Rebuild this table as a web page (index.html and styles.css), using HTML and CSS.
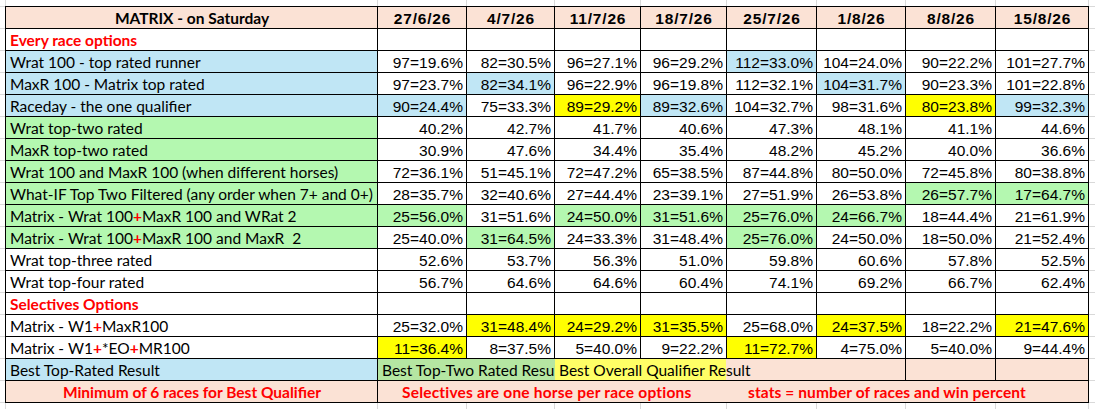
FILE: index.html
```html
<!DOCTYPE html>
<html lang="en">
<head>
<meta charset="utf-8">
<title>MATRIX - on Saturday</title>
<link rel="stylesheet" href="styles.css">
</head>
<body>
<div class="sheet">
  <div class="ruler top"><span></span><span></span><span></span><span></span><span></span><span></span><span></span><span></span><span></span></div>
  <div class="table">
    <div class="c pe ttl">MATRIX - on Saturday</div>
    <div class="c pe hd">27/6/26</div>
    <div class="c pe hd">4/7/26</div>
    <div class="c pe hd">11/7/26</div>
    <div class="c pe hd">18/7/26</div>
    <div class="c pe hd">25/7/26</div>
    <div class="c pe hd">1/8/26</div>
    <div class="c pe hd">8/8/26</div>
    <div class="c pe hd">15/8/26</div>

    <div class="c sec">Every race options</div>
    <div class="c"></div><div class="c"></div><div class="c"></div><div class="c"></div><div class="c"></div><div class="c"></div><div class="c"></div><div class="c"></div>

    <div class="c lbl bl">Wrat 100 - top rated runner</div>
    <div class="c num">97=19.6%</div>
    <div class="c num">82=30.5%</div>
    <div class="c num">96=27.1%</div>
    <div class="c num">96=29.2%</div>
    <div class="c num bl">112=33.0%</div>
    <div class="c num">104=24.0%</div>
    <div class="c num">90=22.2%</div>
    <div class="c num">101=27.7%</div>

    <div class="c lbl bl">MaxR 100 - Matrix top rated</div>
    <div class="c num">97=23.7%</div>
    <div class="c num bl">82=34.1%</div>
    <div class="c num">96=22.9%</div>
    <div class="c num">96=19.8%</div>
    <div class="c num">112=32.1%</div>
    <div class="c num bl">104=31.7%</div>
    <div class="c num">90=23.3%</div>
    <div class="c num">101=22.8%</div>

    <div class="c lbl bl">Raceday - the one qualifier</div>
    <div class="c num bl">90=24.4%</div>
    <div class="c num">75=33.3%</div>
    <div class="c num ye">89=29.2%</div>
    <div class="c num bl">89=32.6%</div>
    <div class="c num">104=32.7%</div>
    <div class="c num">98=31.6%</div>
    <div class="c num ye">80=23.8%</div>
    <div class="c num bl">99=32.3%</div>

    <div class="c lbl gr">Wrat top-two rated</div>
    <div class="c num">40.2%</div>
    <div class="c num">42.7%</div>
    <div class="c num">41.7%</div>
    <div class="c num">40.6%</div>
    <div class="c num">47.3%</div>
    <div class="c num">48.1%</div>
    <div class="c num">41.1%</div>
    <div class="c num">44.6%</div>

    <div class="c lbl gr">MaxR top-two rated</div>
    <div class="c num">30.9%</div>
    <div class="c num">47.6%</div>
    <div class="c num">34.4%</div>
    <div class="c num">35.4%</div>
    <div class="c num">48.2%</div>
    <div class="c num">45.2%</div>
    <div class="c num">40.0%</div>
    <div class="c num">36.6%</div>

    <div class="c lbl gr">Wrat 100 and MaxR 100 (when different horses)</div>
    <div class="c num">72=36.1%</div>
    <div class="c num">51=45.1%</div>
    <div class="c num">72=47.2%</div>
    <div class="c num">65=38.5%</div>
    <div class="c num">87=44.8%</div>
    <div class="c num">80=50.0%</div>
    <div class="c num">72=45.8%</div>
    <div class="c num">80=38.8%</div>

    <div class="c lbl gr">What-IF Top Two Filtered (any order when 7+ and 0+)</div>
    <div class="c num">28=35.7%</div>
    <div class="c num">32=40.6%</div>
    <div class="c num">27=44.4%</div>
    <div class="c num">23=39.1%</div>
    <div class="c num">27=51.9%</div>
    <div class="c num">26=53.8%</div>
    <div class="c num gr">26=57.7%</div>
    <div class="c num gr">17=64.7%</div>

    <div class="c lbl gr"><span>Matrix - Wrat 100<b class="plus">+</b>MaxR 100 and WRat 2</span></div>
    <div class="c num gr">25=56.0%</div>
    <div class="c num">31=51.6%</div>
    <div class="c num gr">24=50.0%</div>
    <div class="c num gr">31=51.6%</div>
    <div class="c num gr">25=76.0%</div>
    <div class="c num gr">24=66.7%</div>
    <div class="c num">18=44.4%</div>
    <div class="c num">21=61.9%</div>

    <div class="c lbl gr"><span>Matrix - Wrat 100<b class="plus">+</b>MaxR 100 and MaxR  2</span></div>
    <div class="c num">25=40.0%</div>
    <div class="c num gr">31=64.5%</div>
    <div class="c num">24=33.3%</div>
    <div class="c num">31=48.4%</div>
    <div class="c num gr">25=76.0%</div>
    <div class="c num">24=50.0%</div>
    <div class="c num">18=50.0%</div>
    <div class="c num">21=52.4%</div>

    <div class="c lbl">Wrat top-three rated</div>
    <div class="c num">52.6%</div>
    <div class="c num">53.7%</div>
    <div class="c num">56.3%</div>
    <div class="c num">51.0%</div>
    <div class="c num">59.8%</div>
    <div class="c num">60.6%</div>
    <div class="c num">57.8%</div>
    <div class="c num">52.5%</div>

    <div class="c lbl">Wrat top-four rated</div>
    <div class="c num">56.7%</div>
    <div class="c num">64.6%</div>
    <div class="c num">64.6%</div>
    <div class="c num">60.4%</div>
    <div class="c num">74.1%</div>
    <div class="c num">69.2%</div>
    <div class="c num">66.7%</div>
    <div class="c num">62.4%</div>

    <div class="c sec">Selectives Options</div>
    <div class="c"></div><div class="c"></div><div class="c"></div><div class="c"></div><div class="c"></div><div class="c"></div><div class="c"></div><div class="c"></div>

    <div class="c lbl"><span>Matrix - W1<b class="plus">+</b>MaxR100</span></div>
    <div class="c num">25=32.0%</div>
    <div class="c num ye">31=48.4%</div>
    <div class="c num ye">24=29.2%</div>
    <div class="c num ye">31=35.5%</div>
    <div class="c num">25=68.0%</div>
    <div class="c num ye">24=37.5%</div>
    <div class="c num">18=22.2%</div>
    <div class="c num ye">21=47.6%</div>

    <div class="c lbl"><span>Matrix - W1<b class="plus">+</b>*EO<b class="plus">+</b>MR100</span></div>
    <div class="c num ye">11=36.4%</div>
    <div class="c num">8=37.5%</div>
    <div class="c num">5=40.0%</div>
    <div class="c num">9=22.2%</div>
    <div class="c num ye">11=72.7%</div>
    <div class="c num">4=75.0%</div>
    <div class="c num">5=40.0%</div>
    <div class="c num">9=44.4%</div>

    <div class="c lbl bl">Best Top-Rated Result</div>
    <div class="c lbl gm span2 open">Best Top-Two Rated Result</div>
    <div class="c lbl yl span3 open">Best Overall Qualifier Result</div>
    <div class="c pe"></div>
    <div class="c pe"></div>
    <div class="c pe"></div>

    <div class="c pe foot center">Minimum of 6 races for Best Qualifier</div>
    <div class="c pe foot span4 open sel">Selectives are one horse per race options</div>
    <div class="c pe foot span4 stats">stats = number of races and win percent</div>
  </div>
  <div class="ruler bottom"><span></span><span></span><span></span><span></span><span></span><span></span><span></span><span></span><span></span></div>
</div>
</body>
</html>
```

FILE: styles.css
```css
:root {
  --cols: 372px 89px 88px 86px 86px 90px 89px 90px 93px;
  --grid: #d9d9d9;
  --peach: #fbe2d5;
  --blue: #c0e6f5;
  --green: #b4f8b0;
  --green-muted: #b5e6a2;
  --yellow: #ffff00;
  --yellow-light: #ffff66;
  --red: #ff0000;
}

html, body {
  margin: 0;
  padding: 0;
}

body {
  width: 1095px;
  height: 409px;
  overflow: hidden;
  background-color: #ffffff;
  background-image: repeating-linear-gradient(to bottom, var(--grid) 0 1px, transparent 1px 22px);
  background-position: 0 6px;
  color: #000;
}

.sheet {
  padding-left: 5px;
}

.ruler {
  display: grid;
  grid-template-columns: var(--cols);
  width: max-content;
  border-left: 1px solid var(--grid);
  height: 6px;
}

.ruler.bottom {
  height: 8px;
}

.ruler span {
  border-right: 1px solid var(--grid);
}

.table {
  display: grid;
  grid-template-columns: var(--cols);
  grid-auto-rows: 22px;
  width: max-content;
  border-left: 1px solid #000;
  border-top: 1px solid #000;
  background: #fff;
}

.c {
  box-sizing: border-box;
  border-right: 1px solid #000;
  border-bottom: 1px solid #000;
  display: flex;
  align-items: flex-end;
  padding: 0 3px 1px 4px;
  white-space: pre;
  overflow: hidden;
  font-family: "Liberation Sans", Arial, sans-serif;
  font-size: 15.5px;
  line-height: 17px;
  background: #fff;
}

.num {
  justify-content: flex-end;
}

.lbl {
  font-family: Lato, "Liberation Sans", sans-serif;
  font-size: 15.5px;
}

.ttl {
  justify-content: center;
  font-family: Lato, "Liberation Sans", sans-serif;
  font-weight: 700;
  font-size: 15.5px;
}

.hd {
  justify-content: center;
  font-weight: 700;
  font-size: 15.5px;
  letter-spacing: 0.8px;
}

.sec {
  color: var(--red);
  font-family: Lato, "Liberation Sans", sans-serif;
  font-weight: 700;
  font-size: 15.5px;
}

.plus {
  color: var(--red);
  font-weight: 700;
}

.foot {
  color: var(--red);
  font-family: Lato, "Liberation Sans", sans-serif;
  font-weight: 700;
  font-size: 15.5px;
}

.center {
  justify-content: center;
}

.sel {
  padding-left: 24px;
  letter-spacing: 0.2px;
}

.stats {
  padding-left: 21px;
  letter-spacing: 0.1px;
}

.pe { background: var(--peach); }
.bl { background: var(--blue); }
.gr { background: var(--green); }
.ye { background: var(--yellow); }
.gm { background: var(--green-muted); }

.yl {
  background: linear-gradient(to right, var(--yellow-light) 0 171px, var(--peach) 171px);
}

.span2 { grid-column: span 2; }
.span3 { grid-column: span 3; }
.span4 { grid-column: span 4; }

.open {
  border-right: 0;
}
```
